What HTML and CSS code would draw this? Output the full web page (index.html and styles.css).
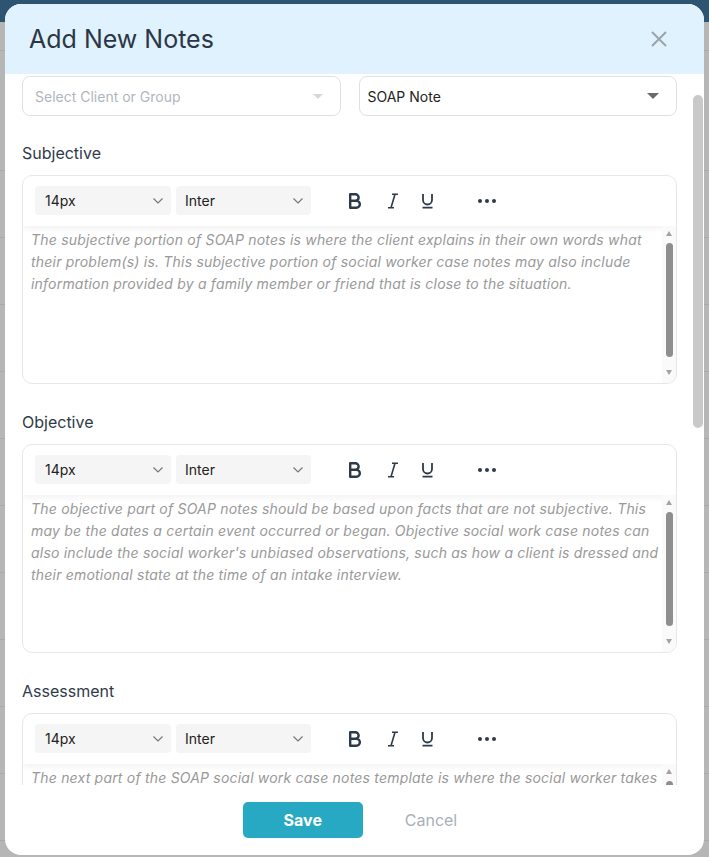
FILE: index.html
```html
<!DOCTYPE html>
<html lang="en">
<head>
    <meta charset="UTF-8">
    <meta name="viewport" content="width=device-width, initial-scale=1.0">
    <title>Add New Notes</title>
    <link rel="stylesheet" href="styles.css">
</head>
<body>
    <div class="modal">
        <div class="modalHead">
            <h2>Add New Notes</h2>
            <button class="closeBtn" type="button" aria-label="Close">
                <svg width="16" height="16" viewBox="0 0 16 16"><path d="M1 1L15 15M15 1L1 15" stroke="#9aa4ad" stroke-width="2" fill="none"/></svg>
            </button>
        </div>
        <div class="modalBody">
            <div class="bodyScroll">
                <div class="pickers">
                    <div class="picker empty">Select Client or Group <span class="caret light"></span></div>
                    <div class="picker">SOAP Note <span class="caret"></span></div>
                </div>

                <label class="noteLabel first">Subjective</label>
                <div class="editor">
                    <div class="toolbar">
                        <div class="tbSelect size">14px <svg width="10" height="6" viewBox="0 0 10 6"><path d="M0.5 0.5L5 5L9.5 0.5" stroke="#777" stroke-width="1.2" fill="none"/></svg></div>
                        <div class="tbSelect font">Inter <svg width="10" height="6" viewBox="0 0 10 6"><path d="M0.5 0.5L5 5L9.5 0.5" stroke="#777" stroke-width="1.2" fill="none"/></svg></div>
                        <div class="tools">
                            <svg class="icoB" width="14" height="16" viewBox="0 0 14 16"><path d="M2.2 1.3h5.2a3.25 3.25 0 0 1 0 6.5H2.2z M2.2 7.8h6.2a3.45 3.45 0 0 1 0 6.9H2.2z" stroke="#2d3a4a" stroke-width="2.4" stroke-linejoin="round" fill="none"/></svg>
                            <svg class="icoI" width="10" height="16" viewBox="0 0 10 16"><path d="M4 1.3h6 M0 14.7h6 M7 1.3L3 14.7" stroke="#2d3a4a" stroke-width="1.6" fill="none"/></svg>
                            <svg class="icoU" width="13" height="16" viewBox="0 0 13 16"><path d="M2 1v6a4.5 4.5 0 0 0 9 0V1 M1.5 14.6h10" stroke="#2d3a4a" stroke-width="1.8" fill="none"/></svg>
                            <svg class="icoMore" width="18" height="4" viewBox="0 0 18 4"><circle cx="2" cy="2" r="2" fill="#2d3a4a"/><circle cx="9" cy="2" r="2" fill="#2d3a4a"/><circle cx="16" cy="2" r="2" fill="#2d3a4a"/></svg>
                        </div>
                    </div>
                    <div class="noteArea">
                        <div class="noteText">The subjective portion of SOAP notes is where the client explains in their own words what their problem(s) is. This subjective portion of social worker case notes may also include information provided by a family member or friend that is close to the situation.</div>
                        <div class="vscroll"><span class="arrUp"></span><span class="vthumb"></span><span class="arrDown"></span></div>
                    </div>
                </div>

                <label class="noteLabel">Objective</label>
                <div class="editor">
                    <div class="toolbar">
                        <div class="tbSelect size">14px <svg width="10" height="6" viewBox="0 0 10 6"><path d="M0.5 0.5L5 5L9.5 0.5" stroke="#777" stroke-width="1.2" fill="none"/></svg></div>
                        <div class="tbSelect font">Inter <svg width="10" height="6" viewBox="0 0 10 6"><path d="M0.5 0.5L5 5L9.5 0.5" stroke="#777" stroke-width="1.2" fill="none"/></svg></div>
                        <div class="tools">
                            <svg class="icoB" width="14" height="16" viewBox="0 0 14 16"><path d="M2.2 1.3h5.2a3.25 3.25 0 0 1 0 6.5H2.2z M2.2 7.8h6.2a3.45 3.45 0 0 1 0 6.9H2.2z" stroke="#2d3a4a" stroke-width="2.4" stroke-linejoin="round" fill="none"/></svg>
                            <svg class="icoI" width="10" height="16" viewBox="0 0 10 16"><path d="M4 1.3h6 M0 14.7h6 M7 1.3L3 14.7" stroke="#2d3a4a" stroke-width="1.6" fill="none"/></svg>
                            <svg class="icoU" width="13" height="16" viewBox="0 0 13 16"><path d="M2 1v6a4.5 4.5 0 0 0 9 0V1 M1.5 14.6h10" stroke="#2d3a4a" stroke-width="1.8" fill="none"/></svg>
                            <svg class="icoMore" width="18" height="4" viewBox="0 0 18 4"><circle cx="2" cy="2" r="2" fill="#2d3a4a"/><circle cx="9" cy="2" r="2" fill="#2d3a4a"/><circle cx="16" cy="2" r="2" fill="#2d3a4a"/></svg>
                        </div>
                    </div>
                    <div class="noteArea">
                        <div class="noteText">The objective part of SOAP notes should be based upon facts that are not subjective. This may be the dates a certain event occurred or began. Objective social work case notes can also include the social worker's unbiased observations, such as how a client is dressed and their emotional state at the time of an intake interview.</div>
                        <div class="vscroll"><span class="arrUp"></span><span class="vthumb"></span><span class="arrDown"></span></div>
                    </div>
                </div>

                <label class="noteLabel">Assessment</label>
                <div class="editor">
                    <div class="toolbar">
                        <div class="tbSelect size">14px <svg width="10" height="6" viewBox="0 0 10 6"><path d="M0.5 0.5L5 5L9.5 0.5" stroke="#777" stroke-width="1.2" fill="none"/></svg></div>
                        <div class="tbSelect font">Inter <svg width="10" height="6" viewBox="0 0 10 6"><path d="M0.5 0.5L5 5L9.5 0.5" stroke="#777" stroke-width="1.2" fill="none"/></svg></div>
                        <div class="tools">
                            <svg class="icoB" width="14" height="16" viewBox="0 0 14 16"><path d="M2.2 1.3h5.2a3.25 3.25 0 0 1 0 6.5H2.2z M2.2 7.8h6.2a3.45 3.45 0 0 1 0 6.9H2.2z" stroke="#2d3a4a" stroke-width="2.4" stroke-linejoin="round" fill="none"/></svg>
                            <svg class="icoI" width="10" height="16" viewBox="0 0 10 16"><path d="M4 1.3h6 M0 14.7h6 M7 1.3L3 14.7" stroke="#2d3a4a" stroke-width="1.6" fill="none"/></svg>
                            <svg class="icoU" width="13" height="16" viewBox="0 0 13 16"><path d="M2 1v6a4.5 4.5 0 0 0 9 0V1 M1.5 14.6h10" stroke="#2d3a4a" stroke-width="1.8" fill="none"/></svg>
                            <svg class="icoMore" width="18" height="4" viewBox="0 0 18 4"><circle cx="2" cy="2" r="2" fill="#2d3a4a"/><circle cx="9" cy="2" r="2" fill="#2d3a4a"/><circle cx="16" cy="2" r="2" fill="#2d3a4a"/></svg>
                        </div>
                    </div>
                    <div class="noteArea">
                        <div class="noteText">The next part of the SOAP social work case notes template is where the social worker takes their observations.</div>
                        <div class="vscroll"><span class="arrUp"></span><span class="vthumb"></span><span class="arrDown"></span></div>
                    </div>
                </div>
            </div>
            <div class="pageTrack"><div class="pageThumb"></div></div>
        </div>
        <div class="modalFoot">
            <button class="saveBtn" type="button">Save</button>
            <button class="cancelBtn" type="button">Cancel</button>
        </div>
    </div>
</body>
</html>
```

FILE: styles.css
```css
*{
    box-sizing: border-box;
}
body{
    margin: 0;
    height: 857px;
    overflow: hidden;
    font-family: Inter, "Noto Sans", sans-serif;
    background:
        linear-gradient(#2d5470, #2d5470) top / 100% 22px no-repeat,
        repeating-linear-gradient(to bottom, transparent 0 66px, #a9a9a9 66px 67px) 0 104px,
        #b6b6b6;
}
.modal{
    margin: 4px 0 0 5px;
    width: 699px;
    height: 851px;
    background: #fff;
    border-radius: 16px;
    overflow: hidden;
    display: flex;
    flex-direction: column;
}
.modalHead{
    height: 70px;
    flex-shrink: 0;
    background: #e0f2fe;
    display: flex;
    align-items: center;
    justify-content: space-between;
    padding: 0 37px 0 24px;
}
.modalHead h2{
    margin: 0;
    font-size: 25px;
    font-weight: 400;
    color: #2b3747;
}
.closeBtn{
    border: 0;
    background: none;
    padding: 0;
    display: flex;
}
.modalBody{
    flex: 1;
    min-height: 0;
    display: flex;
}
.bodyScroll{
    flex: 1;
    overflow: hidden;
    padding: 2px 16px 0 17px;
}
.pageTrack{
    width: 11px;
    padding-top: 21px;
}
.pageThumb{
    width: 10px;
    height: 333px;
    background: #c9c9c9;
    border-radius: 5px;
}
.pickers{
    display: grid;
    grid-template-columns: 1fr 1fr;
    gap: 18px;
}
.picker{
    height: 40px;
    border: 1px solid #dde1e6;
    border-radius: 8px;
    display: flex;
    align-items: center;
    justify-content: space-between;
    padding: 0 17px 0 8px;
    font-size: 14px;
    color: #222;
}
.picker.empty{
    padding-left: 12px;
    color: #b0b6bd;
}
.caret{
    width: 0;
    height: 0;
    border-left: 6px solid transparent;
    border-right: 6px solid transparent;
    border-top: 6px solid #6b6b6b;
}
.caret.light{
    border-left-width: 5.5px;
    border-right-width: 5.5px;
    border-top: 5px solid #d5d7da;
}
.noteLabel{
    display: block;
    margin: 26px 0 10px;
    font-size: 16px;
    line-height: 24px;
    color: #2f3b4a;
}
.noteLabel.first{
    margin-top: 25px;
}
.editor{
    height: 209px;
    border: 1px solid #e7e7e7;
    border-radius: 10px;
    display: flex;
    flex-direction: column;
    overflow: hidden;
}
.toolbar{
    height: 50px;
    flex-shrink: 0;
    display: flex;
    align-items: center;
    padding: 10px 12px 11px;
    box-shadow: 0 3px 6px rgba(0, 0, 0, 0.05);
}
.tbSelect{
    height: 29px;
    background: #f5f5f5;
    border-radius: 4px;
    display: flex;
    align-items: center;
    justify-content: space-between;
    padding: 0 8px 0 10px;
    font-size: 14px;
    color: #222;
}
.tbSelect.size{
    width: 136px;
    margin-right: 5px;
}
.tbSelect.font{
    width: 135px;
    padding-left: 9px;
}
.tools{
    display: flex;
    align-items: center;
}
.icoB{
    margin-left: 37px;
}
.icoI{
    margin-left: 26px;
}
.icoU{
    margin-left: 23px;
}
.icoMore{
    margin-left: 44px;
}
.noteArea{
    flex: 1;
    min-height: 0;
    display: flex;
}
.noteText{
    flex: 1;
    padding: 3px 0 0 8px;
    font-size: 14px;
    line-height: 22px;
    letter-spacing: 0.2px;
    font-style: italic;
    color: #999;
    overflow: hidden;
}
.vscroll{
    width: 14px;
    background: #fafafa;
    display: flex;
    flex-direction: column;
    align-items: center;
    padding: 5px 0 8px;
}
.arrUp, .arrDown{
    width: 0;
    height: 0;
    border-left: 3.5px solid transparent;
    border-right: 3.5px solid transparent;
}
.arrUp{
    border-bottom: 5px solid #a3a3a3;
}
.arrDown{
    margin-top: auto;
    border-top: 5px solid #a3a3a3;
}
.vthumb{
    margin-top: 7px;
    width: 7px;
    height: 114px;
    background: #8e8e8e;
    border-radius: 4px;
}
.modalFoot{
    height: 70px;
    flex-shrink: 0;
    display: flex;
    justify-content: center;
    align-items: flex-start;
    gap: 42px;
    padding: 17px 9px 0 0;
}
.saveBtn{
    width: 120px;
    height: 36px;
    border: 0;
    border-radius: 5px;
    background: #27a8c3;
    color: #fff;
    font-family: inherit;
    font-size: 16px;
    font-weight: 700;
}
.cancelBtn{
    height: 36px;
    border: 0;
    padding: 0;
    background: none;
    color: #a9b0b8;
    font-family: inherit;
    font-size: 16px;
}
```
